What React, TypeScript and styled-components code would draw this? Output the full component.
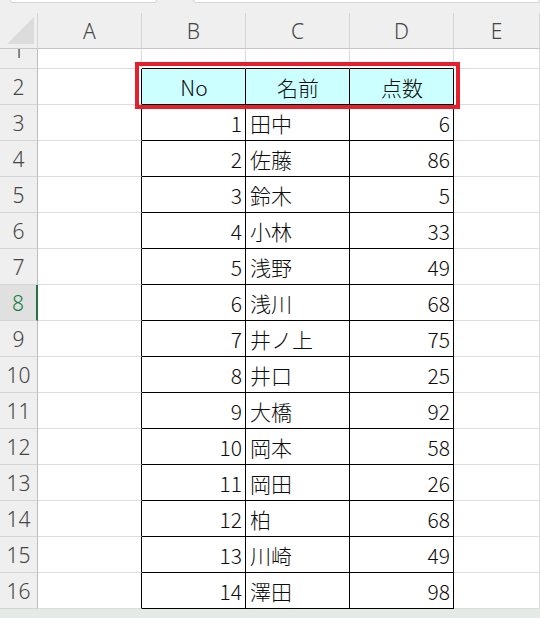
import React from "react";
import styled, { createGlobalStyle, css } from "styled-components";

const rows = [
    { no: 1, name: "田中", score: 6 },
    { no: 2, name: "佐藤", score: 86 },
    { no: 3, name: "鈴木", score: 5 },
    { no: 4, name: "小林", score: 33 },
    { no: 5, name: "浅野", score: 49 },
    { no: 6, name: "浅川", score: 68 },
    { no: 7, name: "井ノ上", score: 75 },
    { no: 8, name: "井口", score: 25 },
    { no: 9, name: "大橋", score: 92 },
    { no: 10, name: "岡本", score: 58 },
    { no: 11, name: "岡田", score: 26 },
    { no: 12, name: "柏", score: 68 },
    { no: 13, name: "川崎", score: 49 },
    { no: 14, name: "澤田", score: 98 },
];

const columns = ["A", "B", "C", "D", "E"];
const activeRow = 8;

const App: React.FC = () => {
    return (
        <>
            <GlobalStyle />
            <Sheet>
                <TopStrip>
                    <Tab $width="147px" />
                    <Tab $width="auto" />
                </TopStrip>

                <Grid>
                    <Corner><CornerTriangle /></Corner>
                    {columns.map((c) => (
                        <ColHead key={c}>{c}</ColHead>
                    ))}

                    {/* row 1, scrolled half out of view */}
                    <RowHead $active={false}><ClippedLabel>1</ClippedLabel></RowHead>
                    <Blank />
                    <Blank $darkBottom />
                    <Blank $darkBottom />
                    <Blank $darkBottom />
                    <Blank />

                    {/* row 2 : header of the list */}
                    <RowHead $active={false}>2</RowHead>
                    <Blank $darkRight />
                    <DataCell $align="center" $head>No</DataCell>
                    <DataCell $align="center" $head>名前</DataCell>
                    <DataCell $align="center" $head>点数</DataCell>
                    <Blank />

                    {rows.map((r, i) => {
                        const rowNo = i + 3;
                        return (
                            <React.Fragment key={r.no}>
                                <RowHead $active={rowNo === activeRow}>{rowNo}</RowHead>
                                <Blank $darkRight />
                                <DataCell $align="right">{r.no}</DataCell>
                                <DataCell $align="left">{r.name}</DataCell>
                                <DataCell $align="right">{r.score}</DataCell>
                                <Blank />
                            </React.Fragment>
                        );
                    })}
                </Grid>

                <BottomStrip />
                <Highlight />
            </Sheet>
        </>
    );
};

const GlobalStyle = createGlobalStyle`
    html, body {
        margin: 0;
        padding: 0;
        background: #ffffff;
        overflow: hidden;
    }
    * {
        box-sizing: border-box;
    }
`;

const Sheet = styled.div`
    position: relative;
    width: 540px;
    height: 618px;
    display: flex;
    flex-flow: column;
    overflow: hidden;
    background-color: #fff;
    font-family: "Noto Sans CJK JP", "Noto Sans", sans-serif;
`;

const TopStrip = styled.div`
    height: 13px;
    flex: none;
    display: flex;
    gap: 36px;
    padding: 0 0 0 10px;
    background-color: #efefef;
`;

const Tab = styled.div<{ $width: string }>`
    width: ${(props) => props.$width};
    flex: ${(props) => (props.$width === "auto" ? "1" : "none")};
    height: 3px;
    background-color: #fff;
    border: 1px solid #d6d6d6;
    border-top: none;
    border-radius: 0 0 5px 5px;
`;

const Grid = styled.div`
    display: grid;
    grid-template-columns: 38px 104px 104px 104px 104px 1fr;
    grid-template-rows: 36px 20px repeat(15, 36px);
    flex: none;
`;

const headFont = css`
    font-family: "Noto Sans", "Open Sans", sans-serif;
    font-size: 21px;
    font-weight: 300;
    color: #454545;
    display: flex;
    align-items: center;
    justify-content: center;
    background-color: #efefef;
`;

const Corner = styled.div`
    position: relative;
    background-color: #efefef;
    border-right: 1px solid #d4d4d4;
    border-bottom: 1px solid #c6c6c6;
`;

const CornerTriangle = styled.div`
    position: absolute;
    left: 7px;
    top: 4px;
    width: 27px;
    height: 27px;
    background-color: #dcdcdc;
    clip-path: polygon(100% 0, 100% 100%, 0 100%);
`;

const ColHead = styled.div`
    ${headFont};
    border-right: 1px solid #d4d4d4;
    border-bottom: 1px solid #c6c6c6;
`;

const RowHead = styled.div<{ $active: boolean }>`
    ${headFont};
    overflow: hidden;
    border-bottom: 1px solid #d4d4d4;
    border-right: 1px solid #bdbdbd;
    ${(props) =>
        props.$active &&
        css`
            background-color: #e0e0e0;
            color: #107c41;
            border-right: 2px solid #217346;
        `}
`;

const ClippedLabel = styled.span`
    align-self: flex-end;
    height: 36px;
    line-height: 36px;
    flex: none;
`;

const Blank = styled.div<{ $darkRight?: boolean; $darkBottom?: boolean }>`
    border-right: 1px solid ${(props) => (props.$darkRight ? "#000" : "#dcdcdc")};
    border-bottom: 1px solid ${(props) => (props.$darkBottom ? "#000" : "#dcdcdc")};
`;

const DataCell = styled.div<{ $align: "left" | "right" | "center"; $head?: boolean }>`
    display: flex;
    align-items: center;
    justify-content: ${(props) =>
        props.$align === "left" ? "flex-start" : props.$align === "right" ? "flex-end" : "center"};
    padding: 0 3px 0 4px;
    font-size: 21px;
    font-weight: 300;
    color: #0c0c0c;
    white-space: nowrap;
    background-color: ${(props) => (props.$head ? "#ccffff" : "#fff")};
    border-right: 1px solid #000;
    border-bottom: 1px solid #000;
`;

const BottomStrip = styled.div`
    flex: 1;
    background-color: #e6eae7;
`;

const Highlight = styled.div`
    position: absolute;
    left: 135px;
    top: 62px;
    width: 325px;
    height: 47px;
    border: 4px solid #e3202b;
    pointer-events: none;
`;

export default App;
